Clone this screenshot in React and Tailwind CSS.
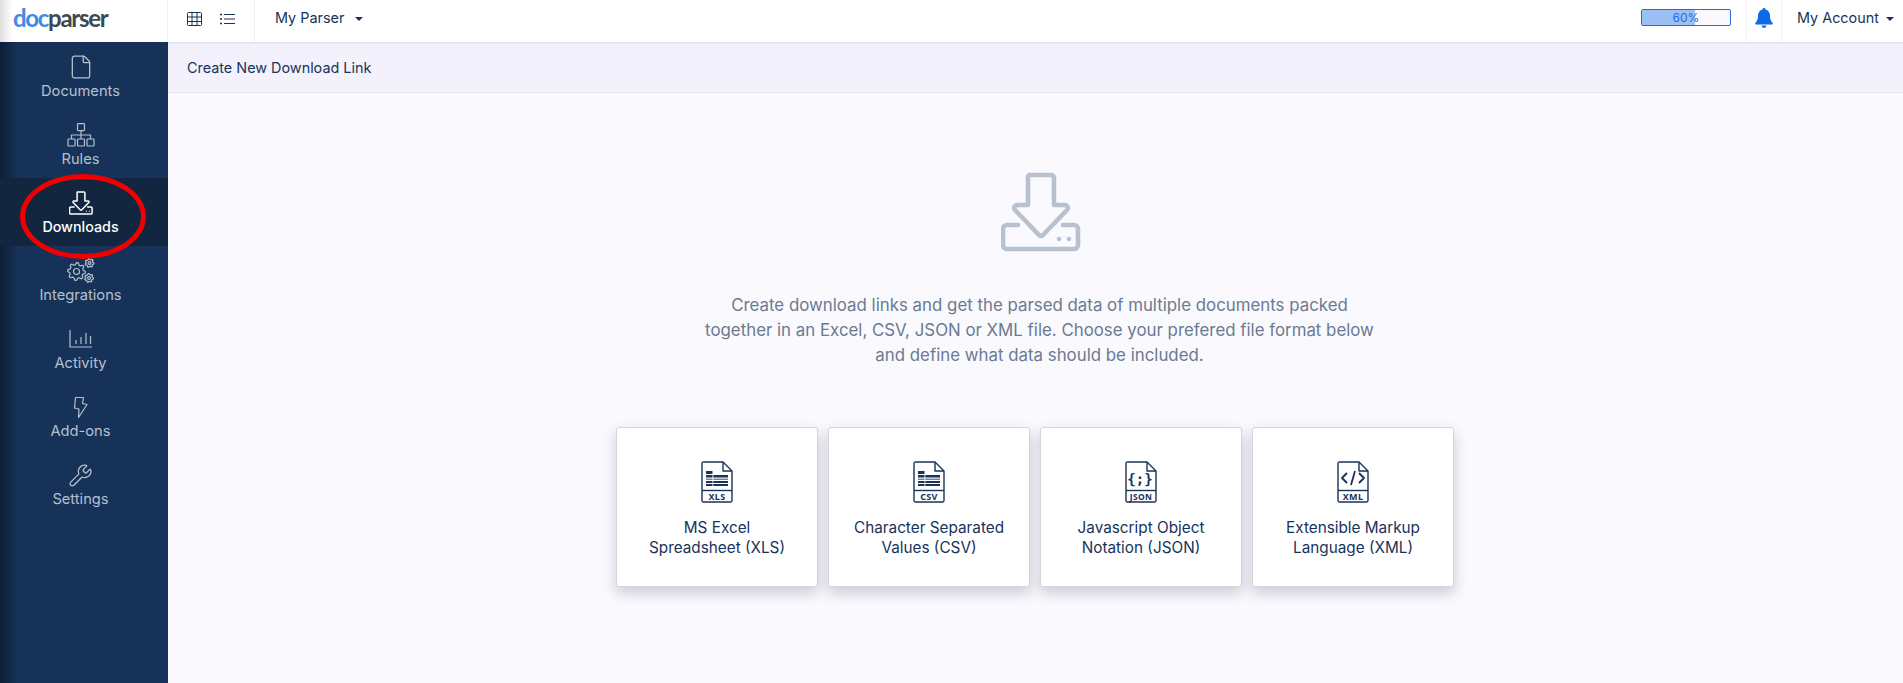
import React from 'react';
import { File, Wrench } from 'lucide-react';

const font = { fontFamily: 'Inter, "Liberation Sans", sans-serif' };

function gearPath(cx, cy, r, teeth) {
  const pts = [];
  const R = r * 1.3;
  const n = teeth * 4;
  for (let i = 0; i < n; i++) {
    const a = (i / n) * Math.PI * 2;
    const on = i % 4 === 0 || i % 4 === 1;
    const rr = on ? R : r;
    pts.push(`${(cx + rr * Math.cos(a)).toFixed(2)} ${(cy + rr * Math.sin(a)).toFixed(2)}`);
  }
  return 'M' + pts.join('L') + 'Z';
}

const RulesIcon = () => (
  <svg width="28" height="24" viewBox="0 0 28 24" fill="none" stroke="currentColor" strokeWidth="1.2">
    <rect x="10.5" y="0.6" width="7" height="7" rx="0.8" />
    <path d="M14 7.6V12M4.5 16V12H23.5V16M14 12V16" />
    <rect x="1" y="16" width="7" height="7" rx="0.8" />
    <rect x="10.5" y="16" width="7" height="7" rx="0.8" />
    <rect x="20" y="16" width="7" height="7" rx="0.8" />
  </svg>
);

const DownloadIcon = ({ className, sw = 1.4 }) => (
  <svg className={className} viewBox="0 0 80 80" fill="none" stroke="currentColor" strokeWidth={sw} strokeLinejoin="round" strokeLinecap="round">
    <path d="M28 3H50a3 3 0 0 1 3 3V33H64a3 3 0 0 1 2 5L42 63a3 3 0 0 1-4 0L14 38a3 3 0 0 1 2-5H27V6a3 3 0 0 1 1-3Z" />
    <path d="M17 53H6a4 4 0 0 0-4 4V73a4 4 0 0 0 4 4H73a4 4 0 0 0 4-4V57a4 4 0 0 0-4-4H62" />
    <circle cx="58" cy="67" r="2.2" fill="currentColor" stroke="none" />
    <circle cx="68" cy="67" r="2.2" fill="currentColor" stroke="none" />
  </svg>
);

const GearsIcon = () => (
  <svg width="28" height="26" viewBox="0 0 28 26" fill="none" stroke="currentColor" strokeWidth="1.2" strokeLinejoin="round">
    <path d={gearPath(9.5, 13.5, 6.8, 8)} />
    <circle cx="9.5" cy="13.5" r="3" />
    <path d={gearPath(22.5, 5, 3.4, 7)} />
    <circle cx="22.5" cy="5" r="1.4" />
    <path d={gearPath(22, 20, 3.4, 7)} />
    <circle cx="22" cy="20" r="1.4" />
  </svg>
);

const ActivityIcon = () => (
  <svg width="24" height="18" viewBox="0 0 24 18" fill="none" stroke="currentColor" strokeWidth="1.2">
    <path d="M1 0V17H23" />
    <path d="M7 10V14M12 7V14M17 3V14M21.500 6V14" />
  </svg>
);

const BoltIcon = () => (
  <svg width="15" height="23" viewBox="0 0 15 23" fill="none" stroke="currentColor" strokeWidth="1.2" strokeLinejoin="round">
    <path d="M2.500 1.500H10.500L9.500 7.500L14 8.500L5.500 21.500L6 13L1.500 12L2.500 1.500Z" />
  </svg>
);

const items = [
  ['Documents', <File key="a" size={26} strokeWidth={1.2} />],
  ['Rules', <RulesIcon key="b" />],
  ['Downloads', <DownloadIcon key="c" className="w-[24px] h-[24px]" sw={5} />, true],
  ['Integrations', <GearsIcon key="d" />],
  ['Activity', <ActivityIcon key="e" />],
  ['Add-ons', <BoltIcon key="f" />],
  ['Settings', <Wrench key="g" size={25} strokeWidth={1.2} />],
];

const Shell = ({ label, children }) => (
  <svg width="32" height="42" viewBox="0 0 32 42" fill="none" stroke="#17335a" strokeWidth="1.4" strokeLinejoin="round">
    <path d="M3 1H22L31 10V39.500a1.500 1.500 0 0 1-1.500 1.500H2.500A1.500 1.500 0 0 1 1 39.500V2.500A1.500 1.500 0 0 1 3 1Z" />
    <path d="M22 1V10H31" />
    <path d="M1 29.500H31" />
    {children}
    <text x="16" y="38.500" textAnchor="middle" fontSize={label.length > 3 ? 8.5 : 9} fontWeight="700" fill="#17335a" stroke="none" fontFamily="'Noto Sans', sans-serif" letterSpacing="0.3">{label}</text>
  </svg>
);

const Sheet = () => (
  <g stroke="none" fill="#17335a">
    <rect x="5" y="10" width="6.500" height="3" />
    <rect x="5" y="14" width="22" height="2.500" />
    <rect x="5" y="17.500" width="22" height="1.500" opacity="0.6" />
    <rect x="5" y="20" width="22" height="2" />
    <rect x="5" y="23" width="22" height="2" />
    <rect x="11.500" y="14" width="0.800" height="11" fill="#fff" />
  </g>
);

const cards = [
  ['XLS', 'MS Excel', 'Spreadsheet (XLS)', <Sheet key="x" />],
  ['CSV', 'Character Separated', 'Values (CSV)', <Sheet key="c" />],
  ['JSON', 'Javascript Object', 'Notation (JSON)', <text key="j" x="15" y="23" textAnchor="middle" fontSize="14" fontWeight="700" fill="#17335a" stroke="none" fontFamily="'DejaVu Sans Mono', monospace">{'{;}'}</text>],
  ['XML', 'Extensible Markup', 'Language (XML)', <path key="m" d="M10 12L5 17L10 22M22 12L27 17L22 22M18 10L14 24" strokeWidth="1.800" />],
];

export default function App() {
  return (
    <div className="relative w-[1903px] h-[683px] overflow-hidden bg-[#f9f9fe] text-[#17335a] text-[14.4px]" style={font}>
      <header className="relative z-10 h-[42px] flex items-stretch bg-white shadow-[0_1px_2px_rgba(40,40,90,0.12)]">
        <div className="w-[168px] flex items-center pl-[13px] pb-[6px] border-r border-[#efeff4] bg-gradient-to-r from-[#dddddd] via-white via-[12px] to-white">
          <span className="text-[24px] font-bold leading-none tracking-[-1.3px]" style={{ fontFamily: 'Lato, sans-serif' }}>
            <span className="text-[#3f8ae6]">doc</span><span className="text-[#3d4852]">parser</span>
          </span>
        </div>
        <div className="w-[87px] flex items-center pl-[19px] pb-[5px] gap-[18px] border-r border-[#efeff4]">
          <svg width="15" height="14" viewBox="0 0 15 14" fill="none" stroke="#17335a" strokeWidth="1">
            <rect x="0.500" y="0.500" width="14" height="13" rx="1" />
            <path d="M0.500 5H14.500M0.500 9.500H14.500M5 0.500V13.500M10 0.500V13.500" />
          </svg>
          <svg width="15" height="12" viewBox="0 0 15 12" fill="none" stroke="#17335a" strokeWidth="1">
            <path d="M4 1.500H15M4 6H15M4 10.500H15" />
            <path d="M0 1.500H2M0 6H2M0 10.500H2" strokeWidth="1.600" />
          </svg>
        </div>
        <div className="flex items-center pl-[20px] pb-[7px]">
          <span>My Parser</span>
          <span className="ml-[11px] mt-[2px] w-0 h-0 border-x-[4px] border-x-transparent border-t-[4.500px] border-t-[#17335a]" />
        </div>
        <div className="ml-auto flex items-stretch">
          <div className="flex items-center pr-[15px] pb-[7px]">
            <div className="relative w-[90px] h-[17px] border border-[#1a6fe0] rounded-[2px] bg-[#f9f9fe] overflow-hidden">
              <div className="h-full w-[60%] bg-[#9cbff5]" />
              <span className="absolute inset-0 flex items-center justify-center text-[12px] text-[#1a6fe0]">60%</span>
            </div>
          </div>
          <div className="w-[36px] flex items-center justify-center border-x border-[#efeff4] pb-[7px]">
            <svg width="18" height="20" viewBox="0 0 18 20" fill="#0d6ae8">
              <path d="M9 0a1.500 1.500 0 0 1 1.500 1.600C13.300 2.300 15 4.700 15 7.500c0 4 1 5.800 2.500 7.300.6.600.3 1.700-.7 1.700H1.200c-1 0-1.300-1.100-.7-1.700C2 13.300 3 11.500 3 7.500 3 4.700 4.700 2.300 7.500 1.600A1.500 1.500 0 0 1 9 0ZM6.500 17.500h5a2.500 2.500 0 0 1-5 0Z" />
            </svg>
          </div>
          <div className="w-[121px] flex items-center pl-[15px] pb-[7px]">
            <span>My Account</span>
            <span className="ml-[7px] mt-[2px] w-0 h-0 border-x-[4px] border-x-transparent border-t-[4.500px] border-t-[#17335a]" />
          </div>
        </div>
      </header>

      <div className="flex h-[641px]">
        <aside className="relative w-[168px] shrink-0 bg-[#163258]">
          <div className="absolute inset-y-0 left-0 w-[18px] bg-gradient-to-r from-[#0c1c33] to-transparent opacity-90" />
          {items.map(([label, icon, active]) => (
            <div key={label} className={`relative h-[68px] pr-[7px] flex flex-col items-center pt-[11px] ${active ? 'bg-[#13263f] text-white font-medium text-[14.3px]' : 'text-[#b5c0cf] text-[14.7px]'}`}>
              <div className="h-[28px] flex items-center justify-center">{icon}</div>
              <span className="leading-[20px]">{label}</span>
            </div>
          ))}
          <div className="absolute left-[20px] top-[132px] w-[126px] h-[85px] rounded-[50%] border-[5px] border-[#f00000]" />
        </aside>

        <main className="flex-1 flex flex-col">
          <div className="h-[51px] flex items-center pl-[19px] pt-[1px] bg-[#f3f2fc] border-b border-[#e3e3ec]">Create New Download Link</div>
          <div className="flex flex-col items-center pr-[1px]">
            <DownloadIcon className="mt-[79px] ml-[11px] w-[80px] h-[80px] text-[#b9c1ce]" sw={4.6} />
            <p className="mt-[41px] ml-[9px] w-[760px] text-center text-[16.850px] leading-[25px] text-[#6b7a90]">
              Create download links and get the parsed data of multiple documents packed<br />
              together in an Excel, CSV, JSON or XML file. Choose your prefered file format below<br />
              and define what data should be included.
            </p>
            <div className="mt-[59px] flex gap-[10px]">
              {cards.map(([label, l1, l2, art]) => (
                <div key={label} className="w-[202px] h-[160px] flex flex-col items-center pt-[33px] bg-white border border-[#d5d5dc] rounded-[3px] shadow-[0_6px_14px_rgba(30,40,70,0.22)]">
                  <Shell label={label}>{art}</Shell>
                  <div className="mt-[15px] leading-[19.500px] text-[15.300px] text-center text-[#17335a]">{l1}<br />{l2}</div>
                </div>
              ))}
            </div>
          </div>
        </main>
      </div>
    </div>
  );
}
